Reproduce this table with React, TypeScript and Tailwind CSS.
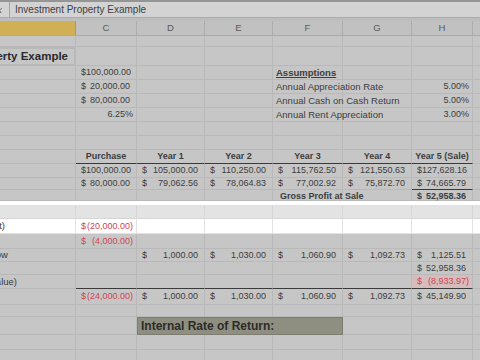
import type { ReactNode } from "react";

const W = ["w-[76px]", "w-[61px]", "w-[68px]", "w-[68px]", "w-[70px]", "w-[69px]", "w-[61px]"];

type C = { c?: ReactNode; cls?: string } | undefined;

function Row({ h, cells = [], line = "border-[#b9b9b9]", bg = "" }: { h: string; cells?: C[]; line?: string; bg?: string }) {
  return (
    <div className={`flex ${h} ${bg}`}>
      {W.map((w, i) => (
        <div
          key={i}
          className={`${w} shrink-0 flex items-center whitespace-nowrap border-r border-b ${line} ${cells[i]?.cls ?? ""}`}
        >
          {cells[i]?.c}
        </div>
      ))}
      <div className={`flex-1 border-b ${line}`} />
    </div>
  );
}

function M({ v, neg, b }: { v: string; neg?: boolean; b?: boolean }) {
  return (
    <div
      className={`flex w-full justify-between text-[9px] pl-[5px] ${neg ? "pr-[3px] text-[#cf4653]" : "pr-[6px]"} ${b ? "font-bold" : ""}`}
    >
      <span>$</span>
      <span>{v}</span>
    </div>
  );
}

// text cut off at the left edge of the window (column A is scrolled away)
function Cut({ t, pr }: { t: string; pr: string }) {
  return <div className={`flex w-full justify-end ${pr}`}>{t}</div>;
}

const dark = "border-b-[#3a3a3a]";

export default function App() {
  return (
    <div className="w-[480px] h-[360px] overflow-hidden bg-[#c6c6c6] text-[#3d3d3d] text-[9.5px] leading-none font-['Liberation_Sans',Arial,sans-serif]">
      <div className="h-[2px] bg-[#959595]" />
      {/* formula bar */}
      <div className="flex h-[16px] items-center bg-[#d3d3d3] border-b border-[#ababab]">
        <div className="w-[10px] h-full flex items-center overflow-hidden border-r border-[#a5a5a5]">
          <span className="ml-[-6px] italic text-[11px] text-[#555] font-['Liberation_Serif',serif]">fx</span>
        </div>
        <span className="ml-[5px] text-[10px] text-[#404040]">Investment Property Example</span>
      </div>
      <div className="h-[3px] bg-[#bdbdbd]" />
      {/* column headers */}
      <div className="flex h-[15px] bg-[#c1c1c1] text-[9.5px] text-[#5a5a5a] border-b border-[#a9a9a9]">
        <div className="w-[76px] shrink-0 bg-[#d0af55] border-r border-[#b79a4a]" />
        {["C", "D", "E", "F", "G", "H"].map((l, i) => (
          <div key={l} className={`${W[i + 1]} shrink-0 flex items-center justify-center border-r border-[#adadad]`}>
            {l}
          </div>
        ))}
        <div className="flex-1" />
      </div>

      <Row h="h-[11px]" />
      <Row
        h="h-[19px]"
        cells={[
          {
            c: <Cut t="Investment Property Example" pr="pr-[6px]" />,
            cls: "border-t-2 border-r-2 border-b-2 border-[#1f1f1f] text-[11.5px] font-bold text-[#2a2a2a]",
          },
        ]}
      />
      <Row
        h="h-[14px]"
        cells={[
          undefined,
          { c: <div className="w-full pl-[5px] pr-[6px] text-right text-[9px]">$100,000.00</div> },
          undefined,
          undefined,
          { c: <span className="pl-[3px] font-bold underline">Assumptions</span> },
        ]}
      />
      <Row
        h="h-[14px]"
        cells={[
          undefined,
          { c: <M v="20,000.00" /> },
          undefined,
          undefined,
          { c: <span className="pl-[3px]">Annual Appreciation Rate</span> },
          undefined,
          { c: <div className="w-full pr-[3px] text-right text-[9px]">5.00%</div> },
        ]}
      />
      <Row
        h="h-[14px]"
        cells={[
          undefined,
          { c: <M v="80,000.00" /> },
          undefined,
          undefined,
          { c: <span className="pl-[3px]">Annual Cash on Cash Return</span> },
          undefined,
          { c: <div className="w-full pr-[3px] text-right text-[9px]">5.00%</div> },
        ]}
      />
      <Row
        h="h-[14px]"
        cells={[
          undefined,
          { c: <div className="w-full pr-[3px] text-right text-[9px]">6.25%</div> },
          undefined,
          undefined,
          { c: <span className="pl-[3px]">Annual Rent Appreciation</span> },
          undefined,
          { c: <div className="w-full pr-[3px] text-right text-[9px]">3.00%</div> },
        ]}
      />
      <Row h="h-[14px]" />
      <Row h="h-[14px]" />
      <Row
        h="h-[14px]"
        cells={[
          undefined,
          ...["Purchase", "Year 1", "Year 2", "Year 3", "Year 4", "Year 5 (Sale)"].map((t) => ({
            c: <div className="w-full text-center font-bold text-[9px]">{t}</div>,
            cls: dark,
          })),
        ]}
      />
      <Row
        h="h-[14px]"
        cells={[
          undefined,
          { c: <M v="100,000.00" /> },
          { c: <M v="105,000.00" /> },
          { c: <M v="110,250.00" /> },
          { c: <M v="115,762.50" /> },
          { c: <M v="121,550.63" /> },
          { c: <div className="w-full pl-[5px] pr-[6px] text-right text-[9px]">$127,628.16</div> },
        ]}
      />
      <Row
        h="h-[12px]"
        cells={[
          undefined,
          { c: <M v="80,000.00" /> },
          { c: <M v="79,062.56" /> },
          { c: <M v="78,064.83" /> },
          { c: <M v="77,002.92" /> },
          { c: <M v="75,872.70" /> },
          { c: <M v="74,665.79" />, cls: dark },
        ]}
      />
      <Row
        h="h-[11px]"
        cells={[
          undefined,
          undefined,
          undefined,
          undefined,
          { c: <span className="pl-[7px] mt-[3px] font-bold text-[9px]">Gross Profit at Sale</span> },
          undefined,
          { c: <div className="w-full mt-[3px]"><M v="52,958.36" b /></div> },
        ]}
      />
      {/* highlighted band */}
      <div className="h-[4px] bg-white" />
      <Row h="h-[14px]" bg="bg-[#e3e3e3]" line="border-[#d6d6d6]" />
      <Row
        h="h-[15px]"
        bg="bg-white"
        line="border-[#e2e2e2]"
        cells={[
          { c: <Cut t="Down Payment)" pr="pr-[70px]" /> },
          { c: <M v="(20,000.00)" neg /> },
        ]}
      />
      <Row
        h="h-[15px]"
        cells={[
          undefined,
          { c: <M v="(4,000.00)" neg /> },
        ]}
      />
      <Row
        h="h-[13px]"
        cells={[
          { c: <Cut t="Net Cash Flow" pr="pr-[67px]" /> },
          undefined,
          { c: <M v="1,000.00" /> },
          { c: <M v="1,030.00" /> },
          { c: <M v="1,060.90" /> },
          { c: <M v="1,092.73" /> },
          { c: <M v="1,125.51" /> },
        ]}
      />
      <Row
        h="h-[13px]"
        cells={[undefined, undefined, undefined, undefined, undefined, undefined, { c: <M v="52,958.36" /> }]}
      />
      <Row
        h="h-[14px]"
        cells={[
          { c: <Cut t="(Sale Value)" pr="pr-[58px]" /> },
          { cls: dark },
          { cls: dark },
          { cls: dark },
          { cls: dark },
          { cls: dark },
          { c: <M v="(8,933.97)" neg />, cls: `${dark} bg-[#d6bcbd]` },
        ]}
      />
      <Row
        h="h-[16px]"
        cells={[
          undefined,
          { c: <M v="(24,000.00)" neg /> },
          { c: <M v="1,000.00" /> },
          { c: <M v="1,030.00" /> },
          { c: <M v="1,060.90" /> },
          { c: <M v="1,092.73" /> },
          { c: <M v="45,149.90" /> },
        ]}
      />
      <Row h="h-[12px]" />
      <div className="flex h-[18px]">
        <div className="w-[76px] shrink-0 border-r border-b border-[#b9b9b9]" />
        <div className="w-[61px] shrink-0 border-r border-b border-[#b9b9b9]" />
        <div className="w-[206px] shrink-0 flex items-center bg-[#8f8f81] border border-[#7c7c70] pl-[3px] text-[12px] font-bold text-[#2c2c2a]">
          Internal Rate of Return:
        </div>
        <div className="w-[69px] shrink-0 border-r border-b border-[#b9b9b9]" />
        <div className="w-[61px] shrink-0 border-r border-b border-[#b9b9b9]" />
        <div className="flex-1 border-b border-[#b9b9b9]" />
      </div>
      <Row h="h-[15px]" />
      <Row h="h-[15px]" />
    </div>
  );
}
